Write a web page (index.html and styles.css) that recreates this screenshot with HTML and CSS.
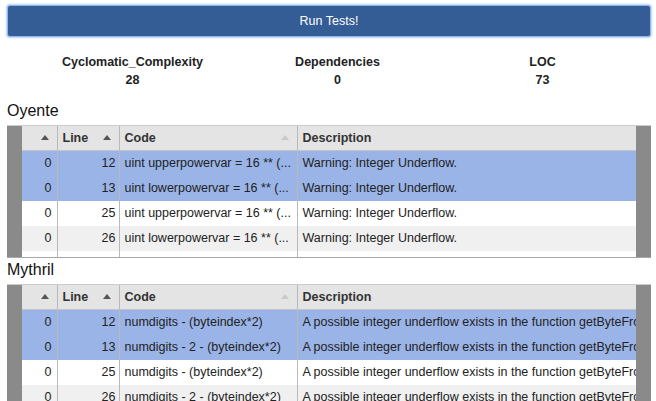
FILE: index.html
```html
<!DOCTYPE html>
<html>
<head>
<meta charset="utf-8">
<link rel="stylesheet" href="styles.css">
</head>
<body>
<div class="page">
  <button class="run">Run Tests!</button>
  <div class="stats">
    <div class="stat"><div class="label">Cyclomatic_Complexity</div><div class="value">28</div></div>
    <div class="stat"><div class="label">Dependencies</div><div class="value">0</div></div>
    <div class="stat"><div class="label">LOC</div><div class="value">73</div></div>
  </div>

  <h2 class="section first">Oyente</h2>
  <div class="grid">
    <div class="bar"></div>
    <div class="tablewrap">
      <table>
        <colgroup><col class="c0"><col class="c1"><col class="c2"><col class="c3"></colgroup>
        <thead>
          <tr>
            <th class="num"><span class="tri"></span></th>
            <th><div class="hcell"><span>Line</span><span class="tri"></span></div></th>
            <th><div class="hcell"><span>Code</span><span class="tri light"></span></div></th>
            <th>Description</th>
          </tr>
        </thead>
        <tbody>
          <tr class="sel"><td class="num">0</td><td class="line">12</td><td>uint upperpowervar = 16 ** (...</td><td>Warning: Integer Underflow.</td></tr>
          <tr class="sel"><td class="num">0</td><td class="line">13</td><td>uint lowerpowervar = 16 ** (...</td><td>Warning: Integer Underflow.</td></tr>
          <tr><td class="num">0</td><td class="line">25</td><td>uint upperpowervar = 16 ** (...</td><td>Warning: Integer Underflow.</td></tr>
          <tr class="alt"><td class="num">0</td><td class="line">26</td><td>uint lowerpowervar = 16 ** (...</td><td>Warning: Integer Underflow.</td></tr>
          <tr><td class="num"></td><td class="line"></td><td></td><td></td></tr>
        </tbody>
      </table>
    </div>
    <div class="bar"></div>
  </div>

  <h2 class="section">Mythril</h2>
  <div class="grid">
    <div class="bar"></div>
    <div class="tablewrap">
      <table>
        <colgroup><col class="c0"><col class="c1"><col class="c2"><col class="c3"></colgroup>
        <thead>
          <tr>
            <th class="num"><span class="tri"></span></th>
            <th><div class="hcell"><span>Line</span><span class="tri"></span></div></th>
            <th><div class="hcell"><span>Code</span><span class="tri light"></span></div></th>
            <th>Description</th>
          </tr>
        </thead>
        <tbody>
          <tr class="sel"><td class="num">0</td><td class="line">12</td><td>numdigits - (byteindex*2)</td><td>A possible integer underflow exists in the function getByteFromHex</td></tr>
          <tr class="sel"><td class="num">0</td><td class="line">13</td><td>numdigits - 2 - (byteindex*2)</td><td>A possible integer underflow exists in the function getByteFromHex</td></tr>
          <tr><td class="num">0</td><td class="line">25</td><td>numdigits - (byteindex*2)</td><td>A possible integer underflow exists in the function getByteFromHex</td></tr>
          <tr class="alt"><td class="num">0</td><td class="line">26</td><td>numdigits - 2 - (byteindex*2)</td><td>A possible integer underflow exists in the function getByteFromHex</td></tr>
          <tr><td class="num"></td><td class="line"></td><td></td><td></td></tr>
        </tbody>
      </table>
    </div>
    <div class="bar"></div>
  </div>
</div>
</body>
</html>
```

FILE: styles.css
```css
html, body {
  margin: 0;
  padding: 0;
  background: #ffffff;
  overflow: hidden;
}
body {
  font-family: "Liberation Sans", Arial, Helvetica, sans-serif;
  color: #222;
  font-size: 12.5px;
}
.page {
  padding: 5px 5px 0 7px;
}
.run {
  display: block;
  width: 100%;
  height: 32px;
  margin: 0;
  padding: 0;
  background: #345c95;
  color: #ffffff;
  font-family: "Liberation Sans", Arial, sans-serif;
  font-size: 12.5px;
  border: 1px solid #8fb6ee;
  border-radius: 3px;
  box-shadow: 0 0 2px 1px #b8d3f7;
}
.stats {
  display: grid;
  grid-template-columns: 205px 205px 205px;
  padding-left: 23px;
  margin-top: 16px;
}
.stat {
  text-align: center;
  font-weight: bold;
  line-height: 18px;
  font-size: 12.5px;
  color: #222;
}
.section {
  margin: 3px 0 5px 0;
  font-size: 16px;
  font-weight: normal;
  line-height: 18px;
  color: #111;
}
.section.first {
  margin-top: 13px;
}
.grid {
  display: flex;
  height: 131px;
  border-top: 1px solid #cccccc;
  border-bottom: 1px solid #a8a8a8;
  width: 644px;
}
.bar {
  width: 15px;
  flex: 0 0 15px;
  background: #8a8a8a;
}
.tablewrap {
  flex: 1;
  overflow: hidden;
}
table {
  width: 614px;
  table-layout: fixed;
  border-collapse: collapse;
  border-spacing: 0;
}
col.c0 { width: 35px; }
col.c1 { width: 62px; }
col.c2 { width: 178px; }
col.c3 { width: 339px; }
th, td {
  height: 25px;
  padding: 0 5px;
  white-space: nowrap;
  overflow: hidden;
  text-overflow: clip;
  border-left: 1px solid #b9b9b9;
  box-sizing: border-box;
  line-height: 25px;
  font-size: 12.5px;
}
th:first-child, td:first-child {
  border-left: none;
}
th {
  background: #e4e4e4;
  text-align: left;
  font-weight: bold;
  color: #333;
  height: 24px;
  line-height: 24px;
  border-bottom: 1px solid #c4c4c4;
}
th.num {
  text-align: right;
  padding-right: 8px;
}
.hcell {
  display: flex;
  align-items: center;
  justify-content: space-between;
  padding-right: 3px;
}
.tri {
  display: inline-block;
  width: 0;
  height: 0;
  border-left: 4px solid transparent;
  border-right: 4px solid transparent;
  border-bottom: 5px solid #555;
  vertical-align: middle;
  position: relative;
  top: -1px;
}
.tri.light {
  border-bottom-color: #c9c9c9;
}
td {
  color: #222;
  background: #ffffff;
}
td.num {
  text-align: right;
  padding-right: 5px;
}
td.line {
  text-align: right;
  padding-right: 3px;
}
tr.sel td {
  background: #9ab4e7;
}
tr.alt td {
  background: #f0f0f0;
}
```
